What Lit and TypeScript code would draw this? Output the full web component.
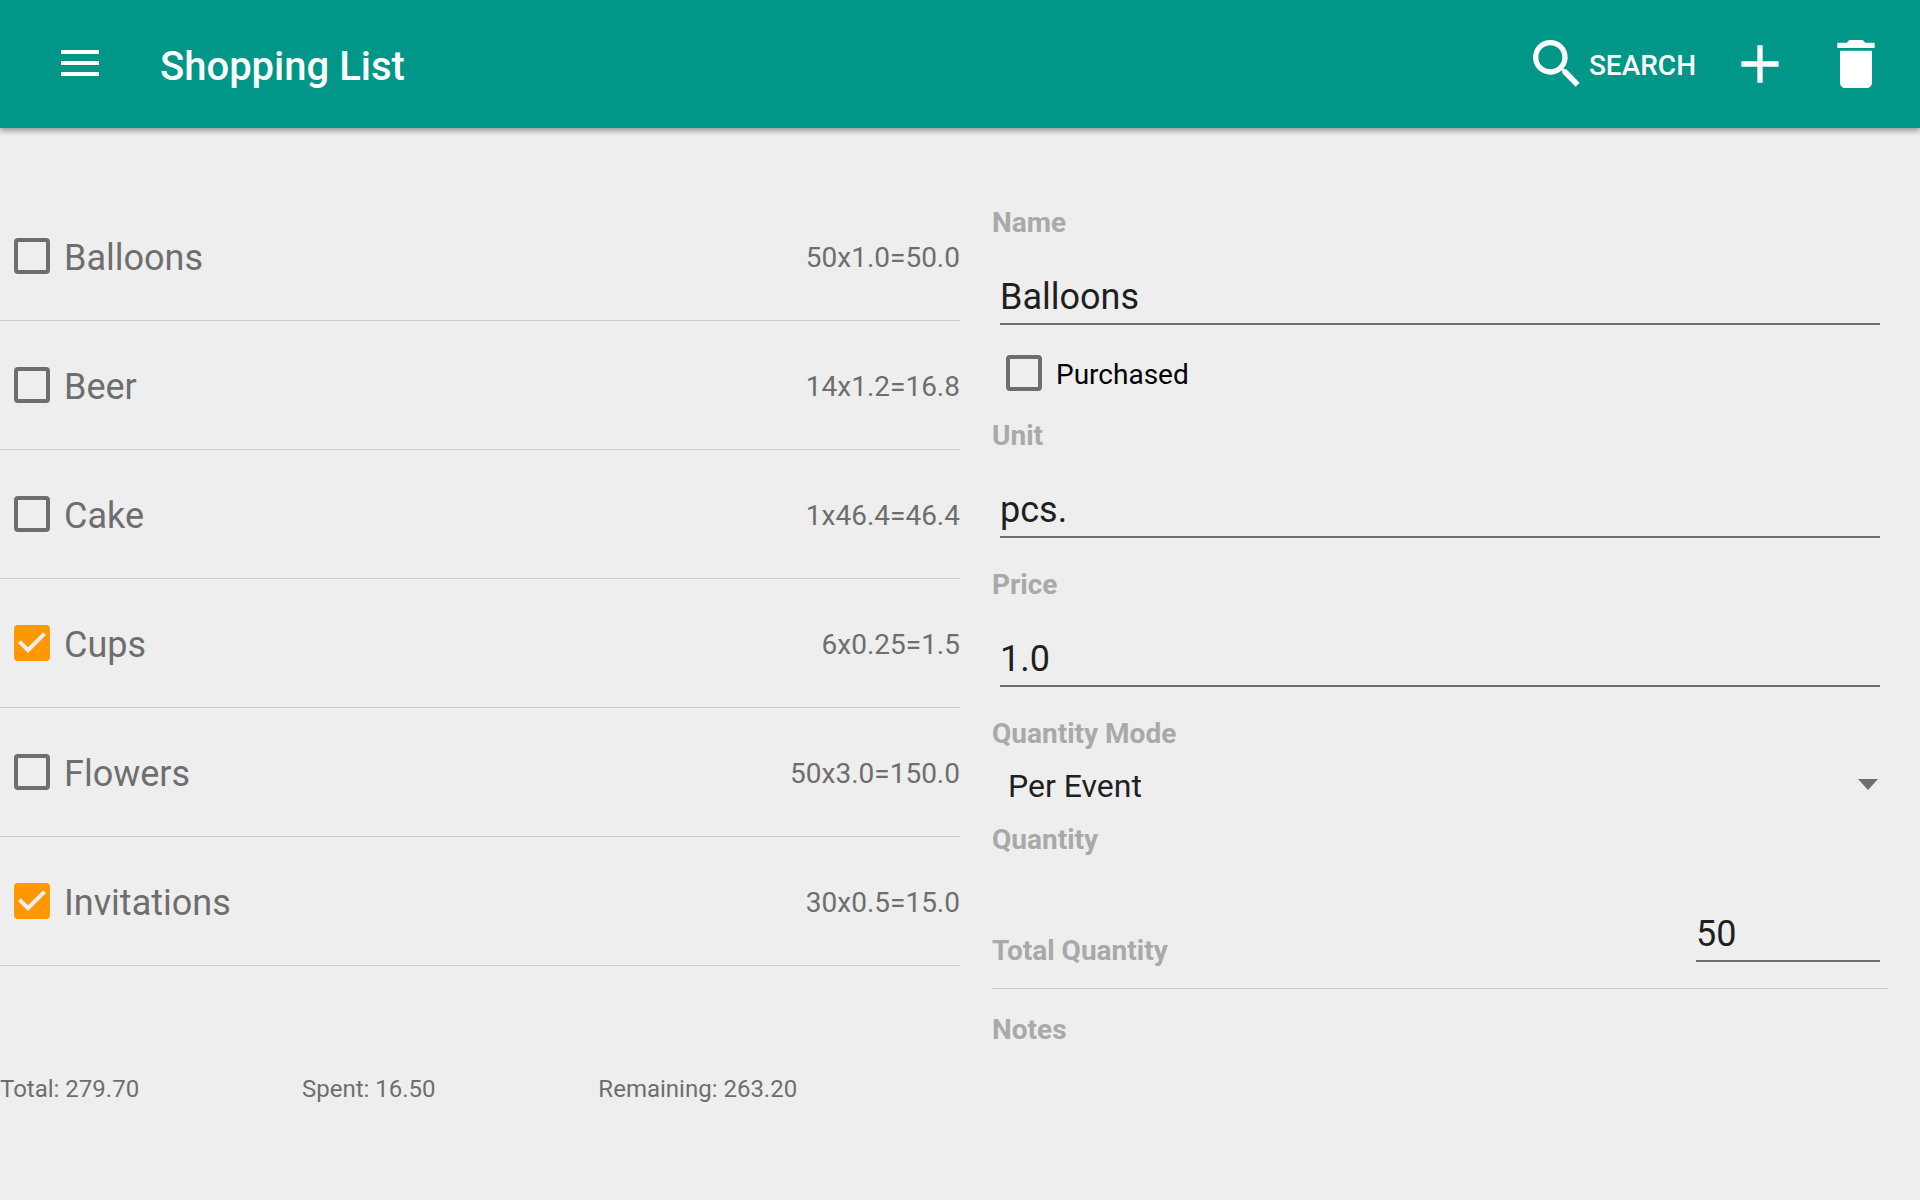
import { LitElement, html, css, svg } from "lit";
import { customElement, property, state } from "lit/decorators.js";

interface Item {
  name: string;
  sum: string;
  done: boolean;
}

const ITEMS: Item[] = [
  { name: "Balloons", sum: "50x1.0=50.0", done: false },
  { name: "Beer", sum: "14x1.2=16.8", done: false },
  { name: "Cake", sum: "1x46.4=46.4", done: false },
  { name: "Cups", sum: "6x0.25=1.5", done: true },
  { name: "Flowers", sum: "50x3.0=150.0", done: false },
  { name: "Invitations", sum: "30x0.5=15.0", done: true },
];

const ICONS = {
  menu: svg`<path d="M5 0h38v4H5zM5 11h38v4H5zM5 22h38v4H5z"/>`,
  search: svg`<path d="M15.5 14h-.79l-.28-.27A6.47 6.47 0 0 0 16 9.5 6.5 6.5 0 1 0 9.5 16c1.61 0 3.09-.59 4.23-1.57l.27.28v.79l5 4.99L20.49 19l-4.99-5zm-6 0C7.01 14 5 11.99 5 9.5S7.01 5 9.5 5 14 7.01 14 9.5 11.99 14 9.5 14z"/>`,
  add: svg`<path d="M19 13h-6v6h-2v-6H5v-2h6V5h2v6h6v2z"/>`,
  remove: svg`<path d="M6 19c0 1.1.9 2 2 2h8c1.1 0 2-.9 2-2V7H6v12zM19 4h-3.500l-1-1h-5l-1 1H5v2h14V4z"/>`,
};

@customElement("check-box")
class CheckBox extends LitElement {
  @property() label = "";
  @property({ type: Boolean }) checked = false;

  static styles = css`
    :host {
      display: block;
      min-width: 0;
    }
    .wrap {
      display: flex;
      align-items: center;
      gap: 14px;
    }
    .box {
      display: grid;
      flex: none;
    }
    .input,
    .mark {
      grid-area: 1 / 1;
      width: 36px;
      height: 36px;
    }
    .input {
      appearance: none;
      box-sizing: border-box;
      margin: 0;
      border: 4px solid #6e6e6e;
      border-radius: 4px;
    }
    .input:checked {
      border-color: #ff9800;
      background: #ff9800;
    }
    .mark {
      fill: #eee;
      pointer-events: none;
      visibility: hidden;
    }
    .input:checked + .mark {
      visibility: visible;
    }
    .text {
      padding-top: 4px;
    }
  `;

  private toggle(e: Event) {
    this.checked = (e.target as HTMLInputElement).checked;
  }

  render() {
    return html`<label class="wrap">
      <span class="box">
        <input class="input" type="checkbox" .checked=${this.checked} @change=${this.toggle} />
        <svg class="mark" viewBox="3 3 18 18" aria-hidden="true">
          <path d="M10 17l-5-5 1.410-1.410L10 14.170l7.590-7.590L19 8z" />
        </svg>
      </span>
      <span class="text">${this.label}</span>
    </label>`;
  }
}

@customElement("app-root")
class AppRoot extends LitElement {
  @state() private items = ITEMS;

  static styles = css`
    :host {
      display: flex;
      flex-direction: column;
      min-height: 100vh;
      background: #eee;
      color: #6e6e6e;
      font-family: Roboto, sans-serif;
      font-size: 28px;
      line-height: 38px;
    }
    .bar {
      display: flex;
      align-items: center;
      gap: 32px;
      height: 128px;
      padding: 0 32px;
      box-sizing: border-box;
      background: #009688;
      color: #fff;
      box-shadow: 0 3px 5px rgba(0, 0, 0, 0.35);
    }
    .action {
      display: flex;
      align-items: center;
      padding: 0;
      border: 0;
      background: none;
      color: inherit;
      font: inherit;
      font-weight: 500;
    }
    .icon {
      width: 64px;
      height: 64px;
      fill: currentColor;
    }
    .menu {
      width: 96px;
      padding: 0 0 2px 24px;
    }
    .menu-icon {
      width: 48px;
      height: 26px;
      fill: currentColor;
    }
    .title {
      flex: 1;
      margin: 0;
      padding-top: 6px;
      font-size: 40px;
      line-height: 48px;
      font-weight: 500;
    }
    .action-text {
      padding-top: 4px;
    }
    .main {
      display: grid;
      grid-template-columns: 1fr 1fr;
      padding-top: 64px;
    }
    .list {
      margin: 0;
      padding: 0;
      list-style: none;
    }
    .row {
      display: flex;
      align-items: center;
      justify-content: space-between;
      height: 128px;
      padding-left: 14px;
      border-bottom: 1px solid #cdcdcd;
    }
    .item {
      font-size: 36px;
      line-height: 48px;
    }
    .sum {
      padding-top: 4px;
    }
    .totals {
      display: flex;
      margin-top: 107px;
      font-size: 24px;
      line-height: 32px;
    }
    .total {
      flex: 1 1 auto;
    }
    .detail {
      display: flex;
      flex-direction: column;
      padding: 11px 32px 0;
    }
    .label {
      padding-top: 2px;
      color: #a9a9a9;
      font-weight: 700;
      line-height: 36px;
    }
    .field {
      display: flex;
      flex-direction: column;
      gap: 32px;
      margin-bottom: 27px;
    }
    .input {
      box-sizing: border-box;
      height: 52px;
      min-width: 0;
      margin: 0 8px;
      padding: 0 0 2px;
      border: 0;
      border-bottom: 2px solid #6e6e6e;
      border-radius: 0;
      background: none;
      color: #1f1f1f;
      font: 36px/48px Roboto, sans-serif;
    }
    .purchased {
      margin: 0 14px 22px;
      color: #000;
    }
    .spinner {
      display: grid;
      align-items: center;
      padding: 0 10px 0 16px;
    }
    .select,
    .arrow {
      grid-area: 1 / 1;
    }
    .select {
      appearance: none;
      height: 68px;
      padding: 0;
      border: 0;
      background: none;
      color: #1f1f1f;
      font: 32px/40px Roboto, sans-serif;
    }
    .arrow {
      justify-self: end;
      width: 20px;
      height: 11px;
      margin-bottom: 4px;
      fill: #6e6e6e;
      pointer-events: none;
    }
    .total-row {
      display: flex;
      justify-content: space-between;
      align-items: flex-end;
      margin: 52px 0 21px;
      padding-bottom: 19px;
      border-bottom: 1px solid #cdcdcd;
    }
    .quantity {
      width: 184px;
      margin-bottom: 7px;
    }
    .notes {
      height: 96px;
      margin: 0 8px;
      padding: 0;
      border: 0;
      resize: none;
      background: none;
      color: #1f1f1f;
      font: 36px/48px Roboto, sans-serif;
    }
  `;

  private field(id: string, label: string, value: string) {
    return html`<div class="field">
      <label class="label" for=${id}>${label}</label>
      <input class="input" id=${id} type="text" .value=${value} />
    </div>`;
  }

  render() {
    return html`
      <header class="bar">
        <button class="action menu" aria-label="Menu">
          <svg class="menu-icon" viewBox="0 0 48 26">${ICONS.menu}</svg>
        </button>
        <h1 class="title">Shopping List</h1>
        <button class="action">
          <svg class="icon" viewBox="0 0 24 24">${ICONS.search}</svg>
          <span class="action-text">SEARCH</span>
        </button>
        <button class="action" aria-label="Add item">
          <svg class="icon" viewBox="0 0 24 24">${ICONS.add}</svg>
        </button>
        <button class="action" aria-label="Delete item">
          <svg class="icon" viewBox="0 0 24 24">${ICONS.remove}</svg>
        </button>
      </header>
      <main class="main">
        <section>
          <ul class="list">
            ${this.items.map(
              (item) => html`<li class="row">
                <check-box class="item" .label=${item.name} .checked=${item.done}></check-box>
                <span class="sum">${item.sum}</span>
              </li>`
            )}
          </ul>
          <div class="totals">
            <span class="total">Total: 279.70</span>
            <span class="total">Spent: 16.50</span>
            <span class="total">Remaining: 263.20</span>
          </div>
        </section>
        <section class="detail">
          ${this.field("name", "Name", "Balloons")}
          <check-box class="purchased" label="Purchased"></check-box>
          ${this.field("unit", "Unit", "pcs.")}
          ${this.field("price", "Price", "1.0")}
          <label class="label" for="mode">Quantity Mode</label>
          <div class="spinner">
            <select class="select" id="mode">
              <option>Per Event</option>
              <option>Per Guest</option>
            </select>
            <svg class="arrow" viewBox="0 0 20 11" aria-hidden="true">
              <path d="M0 0h20L10 11z" />
            </svg>
          </div>
          <span class="label">Quantity</span>
          <div class="total-row">
            <label class="label" for="quantity">Total Quantity</label>
            <input class="input quantity" id="quantity" type="text" .value=${"50"} />
          </div>
          <label class="label" for="notes">Notes</label>
          <textarea class="notes" id="notes"></textarea>
        </section>
      </main>
    `;
  }
}
